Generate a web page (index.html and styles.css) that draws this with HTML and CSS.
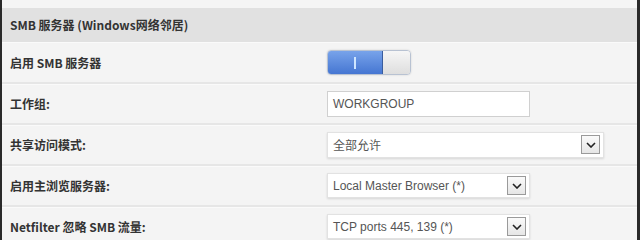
FILE: index.html
```html
<!DOCTYPE html>
<html lang="zh-CN">
<head>
    <meta charset="UTF-8">
    <title>SMB 服务器</title>
    <link rel="stylesheet" href="styles.css">
</head>
<body>
    <div class="frame">
        <div class="top-strip"></div>

        <div class="section-head">SMB 服务器 (Windows网络邻居)</div>

        <div class="row">
            <div class="label">启用 SMB 服务器</div>
            <div class="field">
                <div class="toggle">
                    <span class="toggle-on"><span class="toggle-mark"></span></span>
                    <span class="toggle-off"></span>
                </div>
            </div>
        </div>

        <div class="row">
            <div class="label">工作组:</div>
            <div class="field">
                <div class="text-input">WORKGROUP</div>
            </div>
        </div>

        <div class="row">
            <div class="label">共享访问模式:</div>
            <div class="field">
                <div class="select select-wide">
                    <span class="select-text">全部允许</span>
                    <span class="select-arrow">
                        <svg width="10" height="6" viewBox="0 0 10 6"><path d="M1 1 L5 5 L9 1" fill="none" stroke="#222" stroke-width="1.6"/></svg>
                    </span>
                </div>
            </div>
        </div>

        <div class="row">
            <div class="label">启用主浏览服务器:</div>
            <div class="field">
                <div class="select">
                    <span class="select-text">Local Master Browser (*)</span>
                    <span class="select-arrow">
                        <svg width="10" height="6" viewBox="0 0 10 6"><path d="M1 1 L5 5 L9 1" fill="none" stroke="#222" stroke-width="1.6"/></svg>
                    </span>
                </div>
            </div>
        </div>

        <div class="row">
            <div class="label">Netfilter 忽略 SMB 流量:</div>
            <div class="field">
                <div class="select">
                    <span class="select-text">TCP ports 445, 139 (*)</span>
                    <span class="select-arrow">
                        <svg width="10" height="6" viewBox="0 0 10 6"><path d="M1 1 L5 5 L9 1" fill="none" stroke="#222" stroke-width="1.6"/></svg>
                    </span>
                </div>
            </div>
        </div>
    </div>
</body>
</html>
```

FILE: styles.css
```css
body {
    margin: 0;
    background-color: #2a2a2a;
    height: 240px;
    overflow: hidden;
}

.frame {
    margin: 0 3px 0 2px;
    background-color: #f4f4f4;
    height: 240px;
    overflow: hidden;
    font-family: "Noto Sans CJK SC", "Liberation Sans", sans-serif;
}

.top-strip {
    height: 8px;
    background-color: #f5f5f5;
}

.section-head {
    height: 34px;
    line-height: 34px;
    padding-left: 8px;
    background-color: #e1e1e1;
    border-bottom: 1px solid #fafafa;
    font-size: 12px;
    font-weight: bold;
    color: #333;
}

.row {
    display: flex;
    align-items: center;
    height: 39px;
    border-bottom: 2px solid #e6e6e6;
    box-shadow: 0 1px 0 #fafafa;
}

.label {
    width: 317px;
    padding-left: 8px;
    font-size: 12px;
    font-weight: bold;
    color: #333;
}

.field {
    display: flex;
    align-items: center;
}

/* toggle switch */
.toggle {
    display: flex;
    width: 82px;
    height: 23px;
    border: 1px solid #b8c2d2;
    border-radius: 4px;
    overflow: hidden;
    box-shadow: 0 0 2px rgba(0, 0, 0, 0.15);
}

.toggle-on {
    width: 54px;
    display: flex;
    justify-content: center;
    align-items: center;
    background: linear-gradient(#78a3ea, #4576d2);
    border-right: 1px solid #3a5d9e;
}

.toggle-mark {
    width: 2px;
    height: 12px;
    background-color: #cfe6ff;
}

.toggle-off {
    flex: 1;
    background: linear-gradient(#f6f6f6, #dedede);
}

.text-input {
    width: 196px;
    height: 24px;
    line-height: 24px;
    padding-left: 5px;
    background-color: #fff;
    border: 1px solid #d0d0d0;
    font-family: "Liberation Sans", Arial, sans-serif;
    font-size: 12px;
    color: #555;
}

/* select boxes */
.select {
    display: flex;
    align-items: center;
    justify-content: space-between;
    width: 203px;
    height: 25px;
    padding-left: 5px;
    padding-right: 3px;
    box-sizing: border-box;
    background-color: #fff;
    border: 1px solid #e2e2e2;
    box-shadow: 0 1px 2px rgba(0, 0, 0, 0.12);
}

.select-wide {
    width: 277px;
    height: 26px;
}

.select-text {
    font-family: "Liberation Sans", Arial, "Noto Sans CJK SC", sans-serif;
    font-size: 12px;
    color: #555;
}

.select-wide .select-text {
    font-family: "Noto Sans CJK SC", sans-serif;
    font-size: 12px;
}

.select-arrow {
    display: flex;
    justify-content: center;
    align-items: center;
    width: 17px;
    height: 17px;
    border: 1px solid #9a9a9a;
    background: linear-gradient(#fafafa, #e6e6e6);
}
```
